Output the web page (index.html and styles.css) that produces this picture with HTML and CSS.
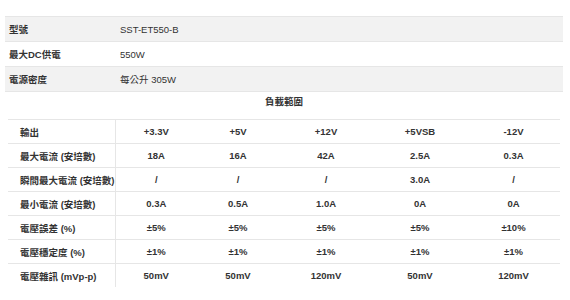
FILE: index.html
```html
<!DOCTYPE html>
<html lang="zh-Hant">
<head>
<meta charset="utf-8">
<link rel="stylesheet" href="styles.css">
</head>
<body>
<div class="page">
  <table class="spec">
    <colgroup><col class="spec-label"><col></colgroup>
    <tr class="shade"><th>型號</th><td>SST-ET550-B</td></tr>
    <tr><th>最大DC供電</th><td>550W</td></tr>
    <tr class="shade"><th>電源密度</th><td>每公升 305W</td></tr>
  </table>
  <div class="caption">負載範圍</div>
  <table class="load">
    <colgroup>
      <col class="c0"><col class="c1"><col class="c2"><col class="c3"><col class="c4"><col class="c5">
    </colgroup>
    <tr><th>輸出</th><td>+3.3V</td><td>+5V</td><td>+12V</td><td>+5VSB</td><td>-12V</td></tr>
    <tr><th>最大電流 (安培數)</th><td>18A</td><td>16A</td><td>42A</td><td>2.5A</td><td>0.3A</td></tr>
    <tr><th>瞬間最大電流 (安培數)</th><td>/</td><td>/</td><td>/</td><td>3.0A</td><td>/</td></tr>
    <tr><th>最小電流 (安培數)</th><td>0.3A</td><td>0.5A</td><td>1.0A</td><td>0A</td><td>0A</td></tr>
    <tr><th>電壓誤差 (%)</th><td>±5%</td><td>±5%</td><td>±5%</td><td>±5%</td><td>±10%</td></tr>
    <tr><th>電壓穩定度 (%)</th><td>±1%</td><td>±1%</td><td>±1%</td><td>±1%</td><td>±1%</td></tr>
    <tr><th>電壓雜訊 (mVp-p)</th><td>50mV</td><td>50mV</td><td>120mV</td><td>50mV</td><td>120mV</td></tr>
  </table>
</div>
</body>
</html>
```
FILE: styles.css
```css
html, body {
  margin: 0;
  padding: 0;
  background: #ffffff;
}
body {
  font-family: "Liberation Sans", "Noto Sans CJK TC", sans-serif;
  font-size: 9.5px;
  color: #333333;
}
.page {
  padding-top: 16px;
}
table {
  border-collapse: collapse;
  table-layout: fixed;
}
.spec {
  margin-left: 5px;
  width: 558px;
}
.spec-label { width: 111px; }
.spec th, .spec td {
  height: 24px;
  padding: 0 4px;
  text-align: left;
  vertical-align: middle;
}
.spec th { font-weight: bold; }
.spec td { font-weight: normal; }
.spec tr.shade th, .spec tr.shade td {
  background: #f2f2f2;
  border-top: 1px solid #e6e6e6;
  border-bottom: 1px solid #e6e6e6;
}
.caption {
  width: 552px;
  margin-left: 8px;
  height: 27px;
  line-height: 19px;
  text-align: center;
  font-weight: bold;
}
.load {
  margin-left: 8px;
  width: 552px;
}
.c0 { width: 107px; }
.c1 { width: 82px; }
.c2 { width: 82px; }
.c3 { width: 94px; }
.c4 { width: 94px; }
.c5 { width: 93px; }
.load th, .load td {
  height: 23px;
  padding: 0;
  border-top: 1px solid #e6e6e6;
  font-weight: bold;
  vertical-align: middle;
}
.load th {
  text-align: left;
  padding-left: 12px;
  border-right: 1px solid #e6e6e6;
}
.load td { text-align: center; }
```
